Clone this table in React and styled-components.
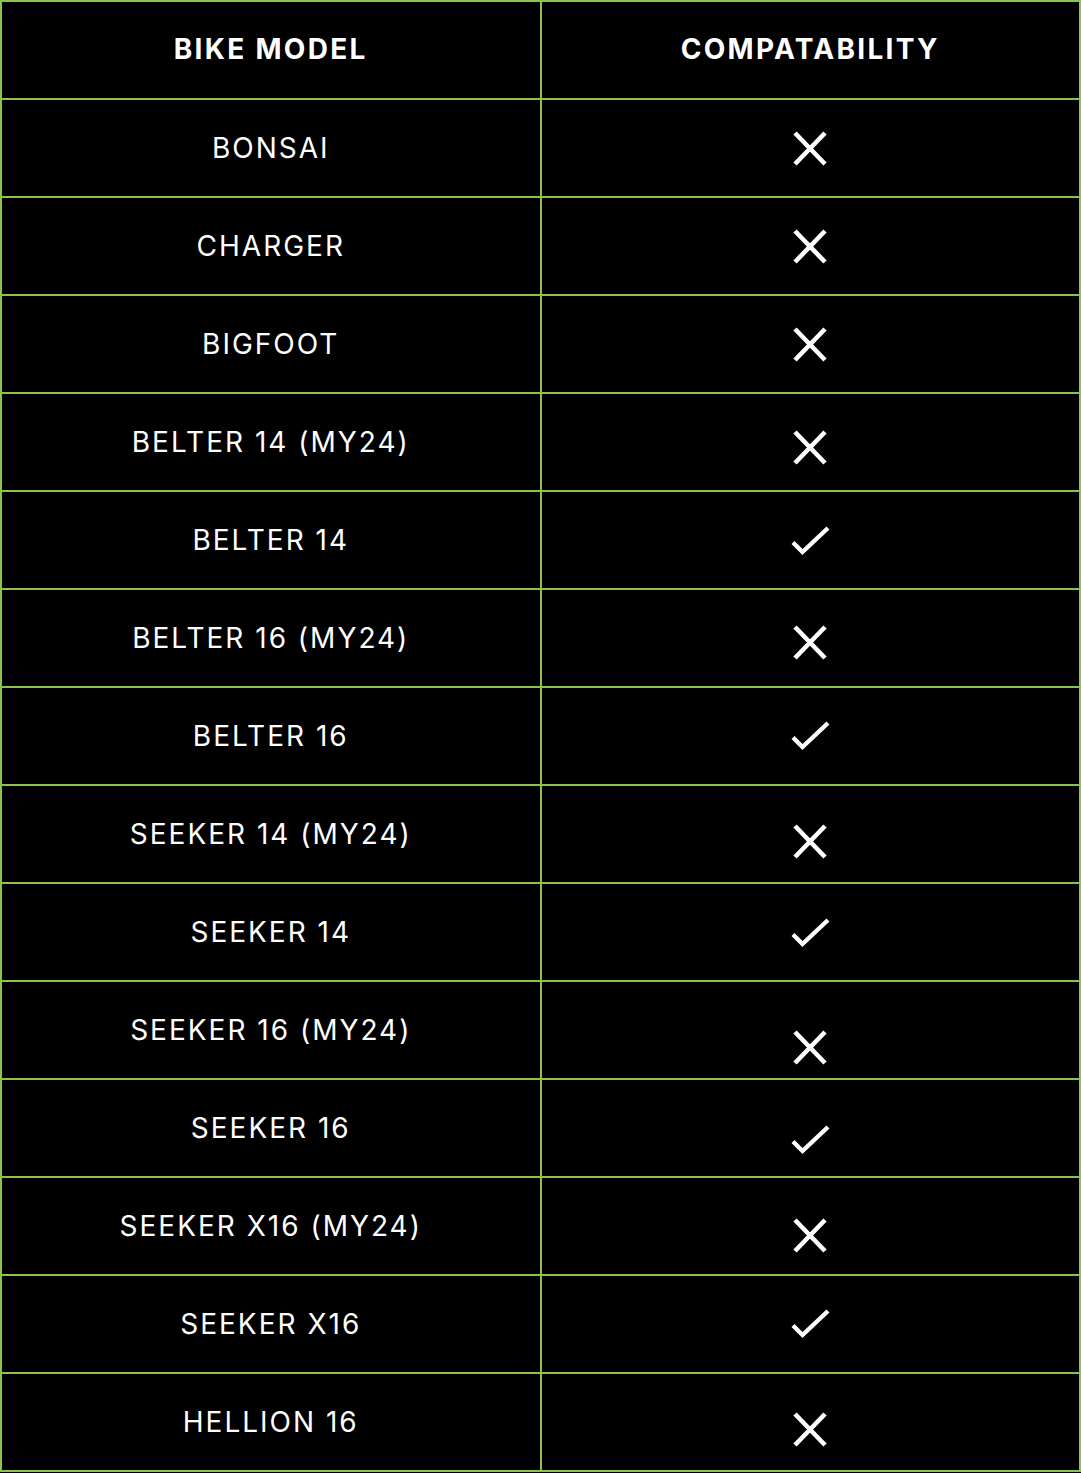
import React from "react";
import styled, { createGlobalStyle } from "styled-components";

const Global = createGlobalStyle`
  html, body { margin: 0; padding: 0; background: #000; }
  body { font-family: Inter, "Noto Sans", "DejaVu Sans", sans-serif; }
`;

const GREEN = "#8cc54e";

const Table = styled.table`
  width: 1081px;
  border-collapse: collapse;
  table-layout: fixed;
  background: #000;
  color: #fff;
  border: 2px solid ${GREEN};
`;

const HeadCell = styled.th`
  height: 93px;
  padding: 0 0 3px;
  border: 2px solid ${GREEN};
  font-size: 28px;
  font-weight: 700;
  letter-spacing: 2.3px;
  text-align: center;
  vertical-align: middle;
`;

const Cell = styled.td`
  height: 96px;
  padding: 0;
  border: 2px solid ${GREEN};
  font-size: 28px;
  font-weight: 400;
  letter-spacing: 2px;
  text-align: center;
  vertical-align: middle;
`;

const Mark = styled.svg`
  display: block;
  margin: ${(p) => p.$shift * 2}px auto 0;
`;

const Cross = ({ shift }) => (
  <Mark $shift={shift} width="34" height="35" viewBox="0 0 34 35" aria-label="Not compatible">
    <path d="M2 2 L32 33 M32 2 L2 33" stroke="#fff" strokeWidth="4.6" fill="none" />
  </Mark>
);

const Check = ({ shift }) => (
  <Mark $shift={shift} width="39" height="30" viewBox="0 0 39 30" aria-label="Compatible">
    <path d="M2 16.5 L11.5 26 L37 2" stroke="#fff" strokeWidth="4.4" fill="none" />
  </Mark>
);

const rows = [
  ["BONSAI", false, 0],
  ["CHARGER", false, 0],
  ["BIGFOOT", false, 0],
  ["BELTER 14 (MY24)", false, 5],
  ["BELTER 14", true, 1],
  ["BELTER 16 (MY24)", false, 4],
  ["BELTER 16", true, 0],
  ["SEEKER 14 (MY24)", false, 7],
  ["SEEKER 14", true, 1],
  ["SEEKER 16 (MY24)", false, 17],
  ["SEEKER 16", true, 12],
  ["SEEKER X16 (MY24)", false, 9],
  ["SEEKER X16", true, 0],
  ["HELLION 16", false, 7],
];

export default function App() {
  return (
    <>
      <Global />
      <Table>
        <thead>
          <tr>
            <HeadCell>BIKE MODEL</HeadCell>
            <HeadCell>COMPATABILITY</HeadCell>
          </tr>
        </thead>
        <tbody>
          {rows.map(([name, ok, shift]) => (
            <tr key={name}>
              <Cell>{name}</Cell>
              <Cell>{ok ? <Check shift={shift} /> : <Cross shift={shift} />}</Cell>
            </tr>
          ))}
        </tbody>
      </Table>
    </>
  );
}
